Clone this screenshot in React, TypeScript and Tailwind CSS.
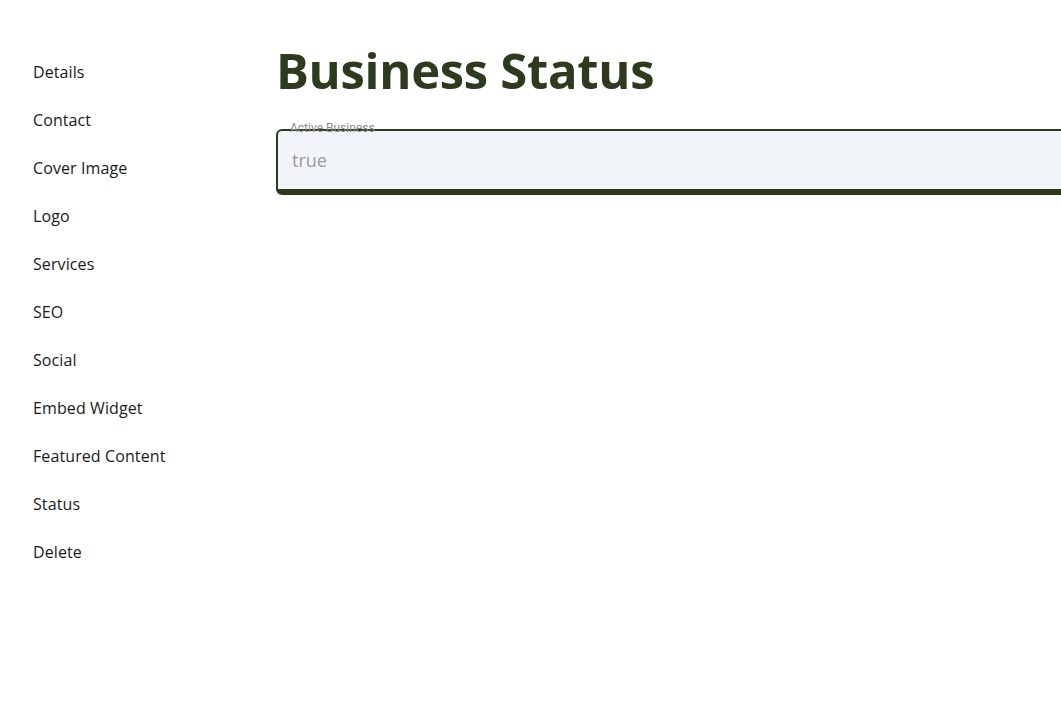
import React from "react";

const navItems = [
  "Details",
  "Contact",
  "Cover Image",
  "Logo",
  "Services",
  "SEO",
  "Social",
  "Embed Widget",
  "Featured Content",
  "Status",
  "Delete",
];

const Sidebar = () => {
  return (
    <nav className="w-[276px] shrink-0 pl-[33px] pt-[60px]">
      <ul className="flex flex-col">
        {navItems.map((item) => (
          <li key={item} className="h-12 text-base leading-6 tracking-[0.1px] text-[#1a1a1a]">
            {item}
          </li>
        ))}
      </ul>
    </nav>
  );
};

const App = () => {
  return (
    <div className="flex h-screen w-screen overflow-hidden bg-white font-['Open_Sans',sans-serif]">
      <Sidebar />
      <main className="flex-1 pt-[35px]">
        <h1 className="text-[49px] font-bold leading-[70px] tracking-[-0.3px] text-[#2d3a1e]">
          Business Status
        </h1>
        <div className="relative mt-[24px] w-[900px]">
          <span className="absolute left-[14px] top-[-10px] font-['Roboto',sans-serif] text-[12px] text-[#8a8a8a]">
            Active Business
          </span>
          <div className="h-[66px] rounded-md border-2 border-b-[6px] border-[#2d3a1e] bg-[#f1f5f9] px-[14px] pt-[15px] text-lg text-[#9a9a9a]">
            true
          </div>
        </div>
      </main>
    </div>
  );
};

export default App;
